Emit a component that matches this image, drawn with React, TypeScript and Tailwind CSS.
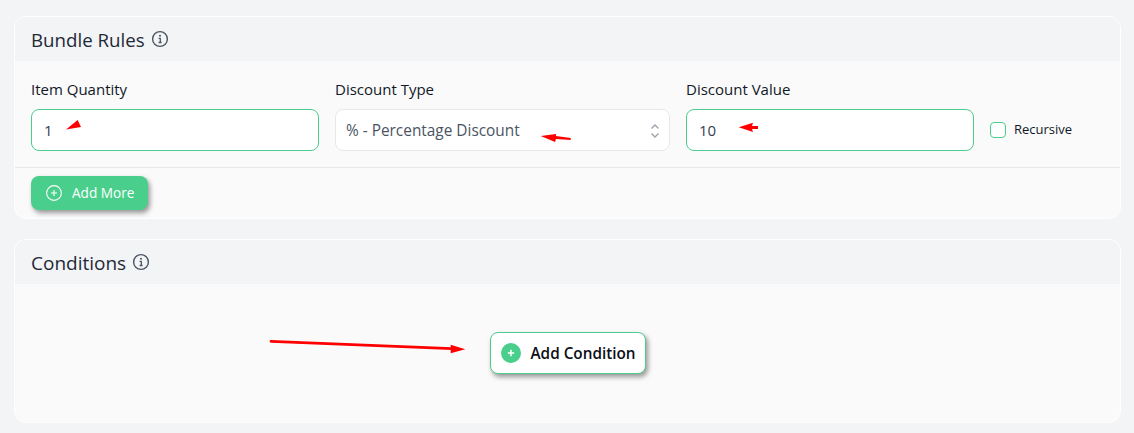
import React from "react";

const font = { fontFamily: '"Open Sans", "Noto Sans", sans-serif' };

function InfoIcon() {
  return (
    <svg width="18" height="18" viewBox="0 0 18 18" fill="none" className="shrink-0">
      <circle cx="9" cy="9" r="7.4" stroke="#4b5563" strokeWidth="1.4" />
      <circle cx="9" cy="5.8" r="1" fill="#4b5563" />
      <path d="M7.6 8.3H9.3V12.4M7.6 12.5H10.6" stroke="#4b5563" strokeWidth="1.3" />
    </svg>
  );
}

function Field({ label, value, className }: { label: string; value: string; className: string }) {
  return (
    <div className={className}>
      <div className="text-[15px] leading-5 text-[#111827] mb-[10px]">{label}</div>
      <div className="h-[42px] rounded-lg border-[1.5px] border-[#4ccd8d] bg-white pl-3 pt-px flex items-center text-[15px] text-[#374151]">
        {value}
      </div>
    </div>
  );
}

export default function App() {
  return (
    <div className="relative h-[433px] w-[1134px] overflow-hidden bg-[#f3f4f6] px-[14px] pt-4" style={font}>
      <section className="h-[203px] w-[1107px] rounded-xl border border-white bg-[#fafafa] overflow-hidden">
        <header className="h-[44px] bg-[#f3f4f6] pl-4 flex items-center gap-[6px]">
          <span className="text-[18.7px] text-[#1f2937] pt-[2px]">Bundle Rules</span>
          <InfoIcon />
        </header>
        <div className="h-[107px] border-b border-[#e5e7eb] pl-4 pt-[18px] flex gap-4">
          <Field label="Item Quantity" value="1" className="w-[288px]" />
          <div className="w-[335px]">
            <div className="text-[15px] leading-5 text-[#111827] mb-[10px]">Discount Type</div>
            <div className="h-[42px] rounded-lg border border-[#e5e7eb] bg-white pl-[10px] pr-[8px] pt-px flex items-center justify-between text-[15.4px] text-[#4b5563]">
              <span>% - Percentage Discount</span>
              <svg width="12" height="18" viewBox="0 0 12 18" fill="none" stroke="#9ca3af" strokeWidth="1.4">
                <path d="M2.5 6.5L6 3L9.5 6.5M2.5 11.5L6 15L9.5 11.5" />
              </svg>
            </div>
          </div>
          <Field label="Discount Value" value="10" className="w-[288px]" />
          <div className="pt-[30px] h-[72px] flex items-center gap-2">
            <span className="h-4 w-4 rounded border-[1.5px] border-[#4ccd8d] bg-white" />
            <span className="text-[13px] text-[#111827]">Recursive</span>
          </div>
        </div>
        <div className="pl-4 pt-2">
          <button className="h-[34px] w-[117px] rounded-lg bg-[#4ace8c] shadow-[2px_3px_5px_rgba(0,0,0,0.4)] flex items-center pl-[15px] gap-[10px] text-[13.6px] font-medium text-white">
            <svg width="16" height="16" viewBox="0 0 16 16" fill="none" stroke="white" strokeWidth="1.1">
              <circle cx="8" cy="8" r="7.4" />
              <path d="M8 5V11M5 8H11" />
            </svg>
            Add More
          </button>
        </div>
      </section>

      <section className="mt-5 h-[184px] w-[1107px] rounded-xl border border-white bg-[#fafafa] overflow-hidden">
        <header className="h-[44px] bg-[#f3f4f6] pl-4 flex items-center gap-[6px]">
          <span className="text-[19px] text-[#1f2937] pt-[2px]">Conditions</span>
          <InfoIcon />
        </header>
        <div className="flex justify-center pt-[48px]">
          <button className="h-[42px] w-[156px] rounded-lg border-[1.5px] border-[#4ccd8d] bg-white shadow-[2px_3px_5px_rgba(0,0,0,0.4)] flex items-center pl-[10px] gap-[10px] text-[15.3px] font-semibold text-[#0b0f17]">
            <svg width="20" height="20" viewBox="0 0 20 20" fill="none">
              <circle cx="10" cy="10" r="10" fill="#4ace8c" />
              <path d="M10 6.8V13.2M6.8 10H13.2" stroke="white" strokeWidth="1.5" />
            </svg>
            Add Condition
          </button>
        </div>
      </section>

      <svg className="absolute left-0 top-0 pointer-events-none" width="1134" height="433" viewBox="0 0 1134 433" fill="#ff0000">
        <polygon points="66,129.5 77.7,120 81,127" />
        <polygon points="540.7,136 556,134 556,136 570.7,138 570.7,140 556,139 555,142" />
        <polygon points="738.7,127.3 753,122.7 752,126 758,126 758,129 752,129 753,132" />
        <path d="M271 341.3L452 348.6" stroke="#ff0000" strokeWidth="2.8" strokeLinecap="round" />
        <polygon points="465.3,349.3 450.7,344.7 450.7,353.3" />
      </svg>
    </div>
  );
}
